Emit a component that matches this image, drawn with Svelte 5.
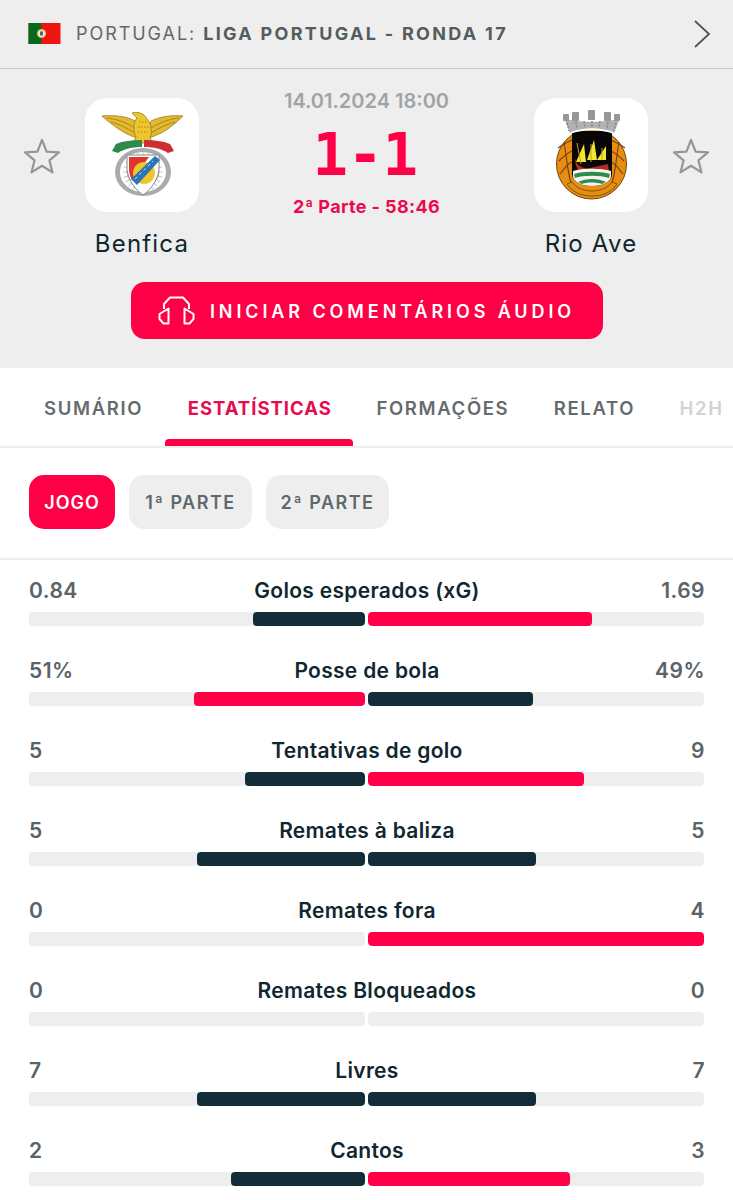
<script>
  const tabs = [
    { label: 'SUMÁRIO' },
    { label: 'ESTATÍSTICAS', active: true },
    { label: 'FORMAÇÕES' },
    { label: 'RELATO' },
    { label: 'H2H', faded: true }
  ];
  const stats = [
    { name: 'Golos esperados (xG)', a: 0.84, b: 1.69, la: '0.84', lb: '1.69' },
    { name: 'Posse de bola', a: 51, b: 49, la: '51%', lb: '49%' },
    { name: 'Tentativas de golo', a: 5, b: 9 },
    { name: 'Remates à baliza', a: 5, b: 5 },
    { name: 'Remates fora', a: 0, b: 4 },
    { name: 'Remates Bloqueados', a: 0, b: 0 },
    { name: 'Livres', a: 7, b: 7 },
    { name: 'Cantos', a: 2, b: 3 }
  ];
  const pct = (v, o) => (v + o === 0 ? 0 : (v / (v + o)) * 100);
  const spokes = Array.from({ length: 24 }, (_, i) => i * 15);
  const seams = [0, 1, 2];
</script>

<div class="page">
  <header class="league">
    <svg class="flag" viewBox="0 0 32 21" aria-hidden="true">
      <rect width="32" height="21" fill="#ee1410" />
      <rect width="13" height="21" fill="#08691c" />
      <circle cx="13" cy="10.5" r="4.6" fill="#e2bf52" />
      <circle cx="13" cy="10.5" r="3.2" fill="#f4f1e4" />
      <rect x="11.5" y="8.2" width="3" height="4.400" rx="1.200" fill="#42609f" />
    </svg>
    <span class="league-text">PORTUGAL: <b>LIGA PORTUGAL - RONDA 17</b></span>
    <svg class="chev" viewBox="0 0 18 30" aria-hidden="true">
      <path d="M2 2 L16 15 L2 28" fill="none" stroke="#4b565c" stroke-width="1.8" />
    </svg>
  </header>

  <section class="match">
    <div class="teams">
      <svg class="star" viewBox="0 0 38 38" aria-hidden="true">
        <path d="M19 3 L23.6 14.6 L36 15.4 L26.4 23.3 L29.5 35.4 L19 28.7 L8.5 35.4 L11.6 23.3 L2 15.4 L14.4 14.6 Z" fill="none" stroke="#949698" stroke-width="2.2" stroke-linejoin="round" />
      </svg>
      <div class="team">
        <div class="crest">
          <svg viewBox="0 0 114 114" aria-hidden="true">
            <!-- wings -->
            <path d="M17 18 C28 17 42 18 50 23 C52 28 52 34 52 40 C43 37 36 33 28 27 C24 24 20 21 17 18 Z" fill="#e2b92f" stroke="#9c7c18" stroke-width=".8" />
            <path d="M98 18 C88 17 76 18 66 23 C64 28 64 34 64 40 C73 37 81 33 88 27 C92 24 95 21 98 18 Z" fill="#e2b92f" stroke="#9c7c18" stroke-width=".8" />
            <path d="M22 20 C32 21 42 25 50 30 M26 24 C34 26 42 30 50 35 M94 20 C84 21 74 25 66 30 M90 24 C82 26 74 30 66 35" fill="none" stroke="#8e7216" stroke-width=".7" />
            <!-- body -->
            <path d="M47 15 C53 13 60 16 62 21 C67 26 67 35 65 40 L68 45 L48 45 L51 39 C48 33 48 25 52 20 Z" fill="#eec42f" stroke="#9c7c18" stroke-width=".8" />
            <path d="M54 24 L63 24 M53 29 L64 29 M53 34 L63 34" stroke="#a88a1c" stroke-width="1" stroke-dasharray="1.500 1.500" />
            <!-- ring -->
            <ellipse cx="58" cy="74" rx="28" ry="24" fill="#a9abad" />
            <ellipse cx="58" cy="74" rx="23" ry="20" fill="#fff" />
            <g stroke="#c4c6c8" stroke-width="1">
              {#each spokes as a}
                <line x1="58" y1="74" x2="58" y2="54" transform="rotate({a} 58 74)" />
              {/each}
            </g>
            <ellipse cx="58" cy="74" rx="16" ry="14" fill="none" stroke="#a9abad" stroke-width="1" />
            <!-- ribbon -->
            <path d="M27 53 L31 46 C38 43 47 42 57 42 L57 49 C47 49 39 51 33 55 Z" fill="#2f8a49" />
            <path d="M89 53 L85 46 C78 43 69 42 59 42 L59 49 C69 49 77 51 83 55 Z" fill="#cf2e33" />
            <!-- shield -->
            <path d="M42 57 L74 57 L74 72 C72 84 65 92 58 97 C51 92 44 84 42 72 Z" fill="#fff" stroke="#85888a" stroke-width="1" />
            <path d="M44 59 L64 59 L47 82 C45 78 44 75 44 71 Z" fill="#e0352c" />
            <circle cx="59" cy="75" r="11" fill="#f1c52b" />
            <path d="M46 81 L70 58 L75 62 L52 87 Z" fill="#2a75b5" />
            <path d="M50 81 L68 63" stroke="#d8e4ef" stroke-width="1" stroke-dasharray="3 3" />
          </svg>
        </div>
        <div class="team-name">Benfica</div>
      </div>

      <div class="score-col">
        <div class="date">14.01.2024 18:00</div>
        <div class="score">1-1</div>
        <div class="time">2ª Parte - 58:46</div>
      </div>

      <div class="team">
        <div class="crest">
          <svg viewBox="0 0 114 114" aria-hidden="true">
            <!-- ball -->
            <circle cx="57.5" cy="66" r="35" fill="#e88c12" stroke="#6e420a" stroke-width="1" />
            {#each seams as i}
              <path d="M{24 + i} {50 + i * 13} C{29 + i * 1} {46 + i * 12} 33 {44 + i * 11} 38 {42 + i * 11}" fill="none" stroke="#6e420a" stroke-width="1.100" />
              <path d="M{91 - i} {50 + i * 13} C{86 - i * 1} {46 + i * 12} 82 {44 + i * 11} 77 {42 + i * 11}" fill="none" stroke="#6e420a" stroke-width="1.100" />
            {/each}
            <path d="M30 44 C33 60 33 74 38 88 M85 44 C82 60 82 74 77 88" fill="none" stroke="#6e420a" stroke-width="1.100" />
            <!-- shield -->
            <path d="M38 33 L78 33 L78 76 C78 84 68 88 58 88 C48 88 38 84 38 76 Z" fill="#070707" />
            <path d="M42 64 L50 46 L52 64 Z M53 62 L60 42 L63 62 Z M63 62 L72 48 L72 62 Z" fill="#f2e633" />
            <path d="M43 45 L47 66 M57 46 L57 64 M68 50 L68 62" stroke="#c9a21d" stroke-width="1" />
            <path d="M41 60 C43 68 48 71 56 70 L74 66 L75 74 L50 77 C44 75 41 68 41 60 Z" fill="#b12a25" />
            <path d="M39 73 C47 70 68 70 77 73 L77 78 C77 84 68 88 58 88 C48 88 39 84 39 78 Z" fill="#f5f5ee" />
            <path d="M40 76 C49 73 66 73 76 76 L75 80 C66 77 49 77 41 80 Z M44 84 C52 80 64 80 72 84 L68 86 C62 84 52 84 48 86 Z" fill="#2e8b4f" />
            <!-- motto band -->
            <path d="M33 86 C42 102 74 102 83 86 L78 84 C70 96 46 96 38 84 Z" fill="#e19016" stroke="#6e420a" stroke-width=".8" />
            <!-- crown -->
            <path d="M30 20 C40 25 76 25 86 20 L80 35 C66 30 50 30 36 35 Z" fill="#b0b1b3" />
            <path d="M36 36 C50 31 66 31 80 36 L79 34 C66 29 50 29 37 34 Z" fill="#fff" />
            <g fill="#94969a">
              <rect x="29" y="16" width="6" height="7" rx="1" />
              <rect x="38" y="14" width="7" height="9" rx="1" />
              <rect x="54" y="12" width="7" height="10" rx="1" />
              <rect x="70" y="14" width="7" height="9" rx="1" />
              <rect x="80" y="16" width="6" height="7" rx="1" />
            </g>
            <path d="M33 25 L35 33 M42 24 L43 31 M50 23 L51 30 M58 23 L58 30 M66 23 L65 30 M74 24 L73 31 M82 25 L80 33" stroke="#7a7c7e" stroke-width="1.200" stroke-dasharray="2 1.500" />
          </svg>
        </div>
        <div class="team-name">Rio Ave</div>
      </div>
      <svg class="star" viewBox="0 0 38 38" aria-hidden="true">
        <path d="M19 3 L23.6 14.6 L36 15.4 L26.4 23.3 L29.5 35.4 L19 28.7 L8.5 35.4 L11.6 23.3 L2 15.4 L14.4 14.6 Z" fill="none" stroke="#949698" stroke-width="2.2" stroke-linejoin="round" />
      </svg>
    </div>

    <button class="audio">
      <svg viewBox="0 0 37 29" aria-hidden="true">
        <path d="M6 13 L6 8 L12 1.500 L25 1.500 L31 8 L31 13" fill="none" stroke="#fff" stroke-width="2" stroke-linejoin="round" />
        <path d="M10.500 12.500 L10.500 27.500 L5.500 27.500 L1.500 23 L1.500 18 Z M26.500 12.500 L26.500 27.500 L31.500 27.500 L35.500 23 L35.500 18 Z" fill="none" stroke="#fff" stroke-width="2" stroke-linejoin="round" />
      </svg>
      <span>INICIAR COMENTÁRIOS ÁUDIO</span>
    </button>
  </section>

  <nav class="tabs">
    {#each tabs as t}
      <div class="tab" class:active={t.active} class:faded={t.faded}>{t.label}</div>
    {/each}
  </nav>

  <div class="pills">
    <div class="pill on">JOGO</div>
    <div class="pill">1ª PARTE</div>
    <div class="pill">2ª PARTE</div>
  </div>

  <main class="stats">
    {#each stats as s}
      <div class="stat">
        <div class="stat-top">
          <span class="val">{s.la ?? s.a}</span>
          <span class="name">{s.name}</span>
          <span class="val">{s.lb ?? s.b}</span>
        </div>
        <div class="bars">
          <div class="track left">
            <div class="fill" class:hot={s.a > s.b} style="width:{pct(s.a, s.b)}%"></div>
          </div>
          <div class="track">
            <div class="fill" class:hot={s.b > s.a} style="width:{pct(s.b, s.a)}%"></div>
          </div>
        </div>
      </div>
    {/each}
  </main>
</div>

<style>
  :global(body) {
    margin: 0;
    background: #fff;
  }
  .page {
    width: 733px;
    height: 1200px;
    overflow: hidden;
    font-family: Inter, "Liberation Sans", sans-serif;
    color: #10272f;
  }
  .league {
    height: 69px;
    box-sizing: border-box;
    display: flex;
    align-items: center;
    padding: 0 22px 1px 28px;
    background: #eeeeee;
    border-bottom: 1px solid #c9cbcb;
  }
  .flag {
    width: 33px;
    height: 21px;
    margin-right: 15px;
  }
  .league-text {
    flex: 1;
    font-size: 18px;
    letter-spacing: 1.95px;
    color: #5f686d;
    white-space: nowrap;
  }
  .league-text b {
    font-weight: 700;
    letter-spacing: 2.3px;
    color: #535c61;
  }
  .chev {
    width: 18px;
    height: 30px;
  }
  .match {
    height: 299px;
    box-sizing: border-box;
    background: #eeeeee;
    padding-top: 19px;
  }
  .teams {
    display: grid;
    grid-template-columns: 38px 114px 1fr 114px 38px;
    column-gap: 24px;
    padding: 0 23px;
    height: 170px;
  }
  .star {
    width: 38px;
    height: 38px;
    margin-top: 49px;
  }
  .team {
    display: flex;
    flex-direction: column;
    align-items: center;
    margin-top: 10px;
  }
  .crest {
    width: 114px;
    height: 114px;
    border-radius: 22px;
    background: #fff;
    display: flex;
  }
  .crest svg {
    width: 114px;
    height: 114px;
  }
  .team-name {
    margin-top: 17px;
    font-size: 24px;
    line-height: 30px;
    letter-spacing: 1.2px;
    white-space: nowrap;
  }
  .score-col {
    text-align: center;
    white-space: nowrap;
  }
  .date {
    margin-top: 1px;
    font-size: 20px;
    line-height: 24px;
    font-weight: 600;
    color: #a1a3a5;
  }
  .score {
    font-family: "DejaVu Sans Mono", monospace;
    font-weight: 700;
    font-size: 59px;
    line-height: 66px;
    letter-spacing: -0.500px;
    color: #ff0046;
    margin-top: 9px;
    margin-right: 3px;
  }
  .time {
    margin-top: 7px;
    font-size: 18px;
    line-height: 24px;
    font-weight: 700;
    letter-spacing: 0.38px;
    color: #eb0a4f;
  }
  .audio {
    display: flex;
    align-items: center;
    justify-content: center;
    gap: 15px;
    width: 472px;
    height: 57px;
    margin: 24px auto 0;
    border: 0;
    border-radius: 14px;
    background: #ff0046;
    color: #fff;
    font-family: inherit;
    font-size: 18px;
    font-weight: 600;
    letter-spacing: 3.9px;
    padding: 0;
  }
  .audio span {
    margin-top: 2px;
  }
  .audio svg {
    width: 37px;
    height: 29px;
  }
  .tabs {
    height: 80px;
    box-sizing: border-box;
    display: flex;
    padding-left: 21px;
    border-bottom: 2px solid #eeeeee;
    overflow: hidden;
  }
  .tab {
    position: relative;
    padding: 1px 21.5px 0 23px;
    line-height: 78px;
    font-size: 18.5px;
    font-weight: 600;
    letter-spacing: 1.65px;
    color: #666b6e;
    white-space: nowrap;
  }
  .tab.active {
    color: #e60c50;
    font-weight: 700;
    letter-spacing: 1px;
  }
  .tab.active::after {
    content: "";
    position: absolute;
    left: 0;
    right: 0;
    bottom: 0;
    height: 7px;
    border-radius: 4px 4px 0 0;
    background: #ff0046;
  }
  .tab.faded {
    color: #d2d3d4;
  }
  .pills {
    display: flex;
    gap: 14px;
    padding: 27px 29px 29px;
    border-bottom: 2px solid #eeeeee;
  }
  .pill {
    width: 123px;
    height: 54px;
    line-height: 56px;
    text-align: center;
    border-radius: 15px;
    background: #eeeeee;
    color: #5f686d;
    font-size: 18px;
    font-weight: 600;
    letter-spacing: 1.5px;
  }
  .pill.on {
    width: 86px;
    letter-spacing: 1px;
    background: #ff0046;
    color: #fff;
  }
  .stats {
    padding: 14px 29px 0;
  }
  .stat {
    height: 80px;
  }
  .stat-top {
    display: flex;
    justify-content: space-between;
    height: 38px;
    line-height: 34px;
    font-size: 21px;
  }
  .val {
    color: #5a6367;
    font-weight: 600;
    letter-spacing: 0.5px;
    min-width: 50px;
  }
  .val:last-child {
    text-align: right;
    margin-right: -1px;
  }
  .name {
    color: #10272f;
    font-weight: 600;
    letter-spacing: 0.3px;
  }
  .bars {
    display: grid;
    grid-template-columns: 1fr 1fr;
    gap: 3px;
  }
  .track {
    height: 14px;
    border-radius: 4px;
    background: #eeeeee;
    overflow: hidden;
    display: flex;
  }
  .track.left {
    justify-content: flex-end;
  }
  .fill {
    height: 100%;
    border-radius: 4px;
    background: #122d38;
  }
  .fill.hot {
    background: #ff0046;
  }
</style>
